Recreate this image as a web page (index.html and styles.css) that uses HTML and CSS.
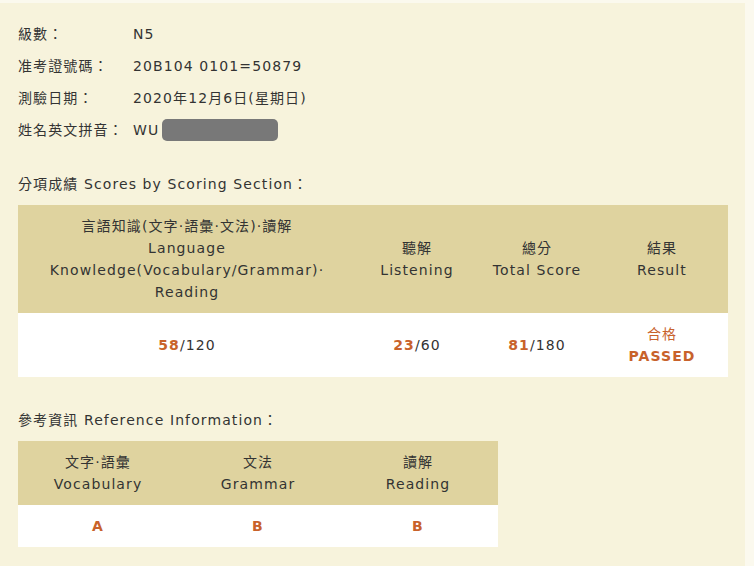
FILE: index.html
```html
<!DOCTYPE html>
<html lang="zh-Hant">
<head>
<meta charset="utf-8">
<title>JLPT Score</title>
<link rel="stylesheet" href="styles.css">
</head>
<body>
<div class="panel">
  <div class="info">
    <div class="row"><span class="label">級數：</span><span class="value">N5</span></div>
    <div class="row"><span class="label">准考證號碼：</span><span class="value">20B104 0101=50879</span></div>
    <div class="row"><span class="label">測驗日期：</span><span class="value">2020年12月6日(星期日)</span></div>
    <div class="row"><span class="label">姓名英文拼音：</span><span class="value">WU<span class="redact"></span></span></div>
  </div>

  <div class="title">分項成績 Scores by Scoring Section：</div>
  <table class="scores">
    <colgroup>
      <col class="c1"><col class="c2"><col class="c3"><col class="c4">
    </colgroup>
    <thead>
      <tr>
        <th>言語知識(文字·語彙·文法)·讀解<br>Language<br>Knowledge(Vocabulary/Grammar)·<br>Reading</th>
        <th>聽解<br>Listening</th>
        <th>總分<br>Total Score</th>
        <th>結果<br>Result</th>
      </tr>
    </thead>
    <tbody>
      <tr>
        <td><b class="hl">58</b>/120</td>
        <td><b class="hl">23</b>/60</td>
        <td><b class="hl">81</b>/180</td>
        <td class="result">合格<br><b>PASSED</b></td>
      </tr>
    </tbody>
  </table>

  <div class="title second">參考資訊 Reference Information：</div>
  <table class="ref">
    <thead>
      <tr>
        <th>文字·語彙<br>Vocabulary</th>
        <th>文法<br>Grammar</th>
        <th>讀解<br>Reading</th>
      </tr>
    </thead>
    <tbody>
      <tr>
        <td><b class="hl">A</b></td>
        <td><b class="hl">B</b></td>
        <td><b class="hl">B</b></td>
      </tr>
    </tbody>
  </table>
</div>
</body>
</html>
```

FILE: styles.css
```css
html, body {
  margin: 0;
  padding: 0;
  background: #fbf9ee;
}
body {
  font-family: "DejaVu Sans", Verdana, "Noto Sans CJK TC", sans-serif;
  font-size: 14px;
  color: #333;
  letter-spacing: 1.1px;
}
.panel {
  margin-top: 3px;
  width: 745px;
  height: 563px;
  box-sizing: border-box;
  background: #f7f3dc;
  padding: 15px 18px 0 18px;
}
.info .row {
  display: flex;
  height: 32px;
  line-height: 32px;
  align-items: center;
}
.label {
  width: 115px;
  flex: none;
}
.value {
  display: flex;
  align-items: center;
}
.redact {
  display: inline-block;
  width: 116px;
  height: 22px;
  margin-left: 3px;
  background: #787878;
  border-radius: 5px;
}
.title {
  margin-top: 27px;
  line-height: 22px;
  margin-bottom: 10px;
}
.title.second {
  margin-top: 32px;
}
table {
  border-collapse: collapse;
  border-spacing: 0;
}
th {
  background: #dfd39f;
  font-weight: normal;
  padding: 10px 0;
  line-height: 22px;
  text-align: center;
}
td {
  background: #fff;
  padding: 10px 0;
  line-height: 22px;
  text-align: center;
}
.scores {
  width: 710px;
}
.scores col.c1 { width: 338px; }
.scores col.c2 { width: 122px; }
.scores col.c3 { width: 118px; }
.scores col.c4 { width: 132px; }
.ref {
  width: 480px;
  table-layout: fixed;
}
.hl {
  color: #c8622b;
  font-weight: bold;
}
.result {
  color: #c8622b;
}
.result b {
  font-weight: bold;
}
```
